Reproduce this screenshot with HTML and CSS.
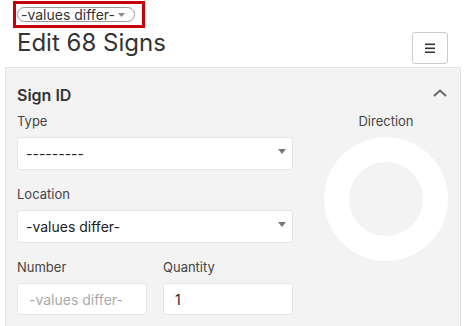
FILE: index.html
```html
<!DOCTYPE html>
<html>
<head>
    <link rel="stylesheet" href="styles.css">
</head>
<body>
<div class="edit-page">
    <div class="bulk-bar">
        <span class="highlight">
            <span class="pill">
                <span class="pill-text">-values differ-</span>
                <svg class="caret" width="7" height="4" viewBox="0 0 7 4"><polygon points="0,0 7,0 3.5,4"/></svg>
            </span>
        </span>
    </div>
    <header class="page-head">
        <h1>Edit 68 Signs</h1>
        <button class="menu-btn" type="button">
            <svg width="10" height="10" viewBox="0 0 10 10">
                <rect x="0" y="0.5" width="10" height="1.6"/>
                <rect x="0" y="4.5" width="10" height="1.6"/>
                <rect x="0" y="8.5" width="10" height="1.6"/>
            </svg>
        </button>
    </header>
    <section class="panel">
        <div class="panel-head">
            <h2>Sign ID</h2>
            <svg class="chevron" width="14" height="8" viewBox="0 0 14 8"><polyline points="1,7 7,1.5 13,7"/></svg>
        </div>
        <div class="panel-body">
            <div class="fields">
                <div class="field">
                    <label>Type</label>
                    <div class="select">
                        <span>---------</span>
                        <svg class="arrow" width="8" height="5" viewBox="0 0 8 5"><polygon points="0,0 8,0 4,5"/></svg>
                    </div>
                </div>
                <div class="field">
                    <label>Location</label>
                    <div class="select">
                        <span>-values differ-</span>
                        <svg class="arrow" width="8" height="5" viewBox="0 0 8 5"><polygon points="0,0 8,0 4,5"/></svg>
                    </div>
                </div>
                <div class="field-row">
                    <div class="field">
                        <label>Number</label>
                        <div class="input placeholder">-values differ-</div>
                    </div>
                    <div class="field">
                        <label>Quantity</label>
                        <div class="input">1</div>
                    </div>
                </div>
            </div>
            <div class="direction">
                <label>Direction</label>
                <div class="dial"><div class="dial-hole"></div></div>
            </div>
        </div>
    </section>
</div>
</body>
</html>
```

FILE: styles.css
```css
body {
    margin: 0;
    background: #fff;
    font-family: Inter, "Liberation Sans", sans-serif;
    color: #333;
}

.bulk-bar {
    padding: 1px 0 0 13px;
    height: 27px;
}

.highlight {
    display: inline-flex;
    border: 3px solid #c8000a;
    padding: 3px 7px 3px 1px;
}

.pill {
    display: inline-flex;
    align-items: center;
    box-sizing: border-box;
    height: 15px;
    padding: 0 9px 0 3px;
    border: 1px solid #999;
    border-radius: 8px;
    font-size: 14px;
    line-height: 13px;
    color: #333;
}

.pill .caret {
    margin-left: 3px;
    fill: #888;
}

.page-head {
    display: flex;
    justify-content: space-between;
    align-items: flex-start;
    padding: 1px 19px 0 17px;
}

.page-head h1 {
    margin: 0;
    font-size: 24px;
    line-height: 28px;
    font-weight: 400;
    color: #333;
}

.menu-btn {
    margin-top: 3px;
    width: 36px;
    height: 32px;
    padding: 0;
    background: #fff;
    border: 1px solid #ccc;
    border-radius: 3px;
    display: flex;
    align-items: center;
    justify-content: center;
}

.menu-btn svg {
    fill: #333;
}

.panel {
    margin: 3px 6px 0 5px;
    background: #f3f3f3;
    border: 1px solid #e3e3e3;
    padding: 17px 0 20px 11px;
}

.panel-head {
    display: flex;
    justify-content: space-between;
    align-items: flex-start;
    margin-bottom: 8px;
    padding-right: 13px;
}

.panel-head h2 {
    margin: 0;
    font-size: 16px;
    line-height: 20px;
    font-weight: 600;
    color: #333;
}

.chevron {
    margin-top: 4px;
    fill: none;
    stroke: #666;
    stroke-width: 2;
}

.panel-body {
    display: flex;
    gap: 19px;
}

.fields {
    width: 276px;
}

label {
    display: block;
    font-size: 13px;
    line-height: 16px;
    color: #444;
    margin-bottom: 8px;
}

.field {
    margin-bottom: 16px;
}

.field-row {
    display: flex;
    gap: 16px;
}

.field-row .field {
    flex: 1;
    margin-bottom: 0;
}

.select, .input {
    box-sizing: border-box;
    height: 33px;
    background: #fff;
    border: 1px solid #e6e6e6;
    border-radius: 3px;
    font-size: 14px;
    color: #222;
    display: flex;
    align-items: center;
}

.select {
    justify-content: space-between;
    padding: 0 6px 0 8px;
}

.select .arrow {
    fill: #777;
    margin-top: -5px;
}

.input {
    height: 32px;
    padding: 0 11px;
}

.input.placeholder {
    color: #aaa;
}

.direction {
    flex: 1;
    display: flex;
    flex-direction: column;
    align-items: center;
}

.dial {
    width: 124px;
    height: 124px;
    border-radius: 50%;
    background: #fff;
    display: flex;
    align-items: center;
    justify-content: center;
}

.dial-hole {
    width: 74px;
    height: 74px;
    border-radius: 50%;
    background: #f3f3f3;
}
```
